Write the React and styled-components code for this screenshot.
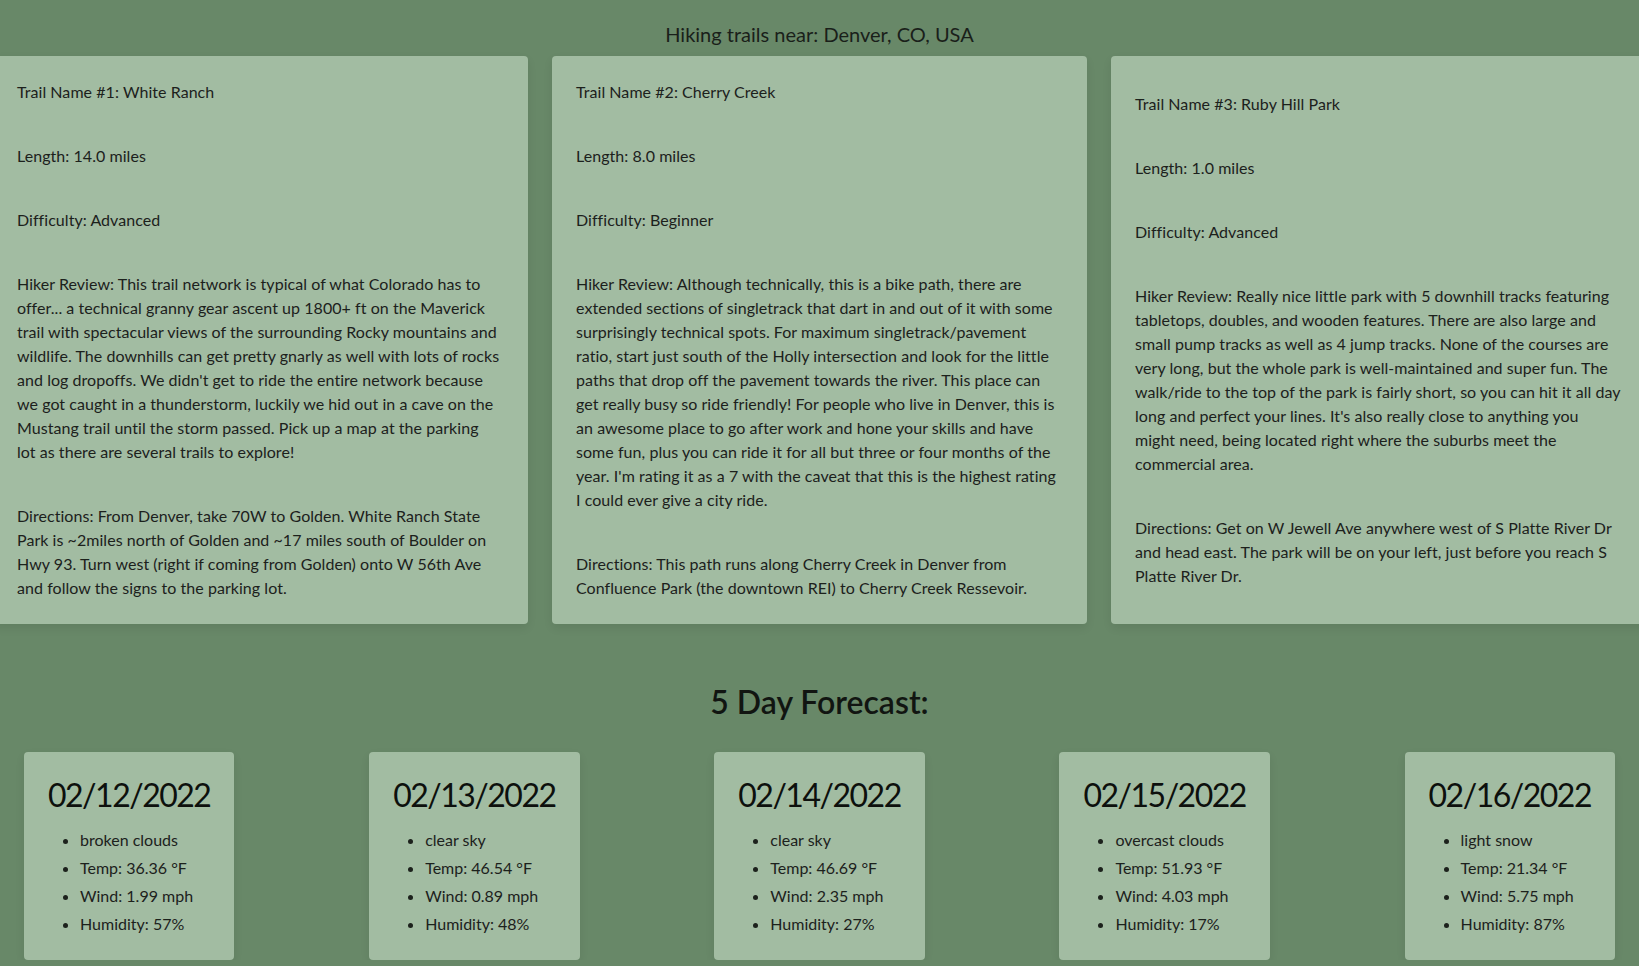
import React from "react";
import styled, { createGlobalStyle } from "styled-components";

const GlobalStyle = createGlobalStyle`
  html, body {
    margin: 0;
    padding: 0;
    background: #688868;
    overflow-x: hidden;
  }
  body {
    font-family: "Lato", "Liberation Sans", sans-serif;
    color: #1c211c;
    font-size: 16px;
    line-height: 1.5;
  }
`;

const Page = styled.main`
  display: flex;
  flex-direction: column;
  align-items: center;
  padding-top: 19px;
`;

const Title = styled.h1`
  margin: 0 0 7px;
  font-size: 20px;
  font-weight: 400;
  line-height: 30px;
  color: #1a1f1a;
  text-align: center;
`;

const TrailRow = styled.section`
  display: flex;
  justify-content: center;
  gap: 24px;
  width: 100%;
`;

const TrailCard = styled.article`
  flex: 0 0 535px;
  box-sizing: border-box;
  padding: 24px;
  background: #a2bca2;
  border-radius: 4px;
  box-shadow: 0 4px 10px rgba(0, 0, 0, 0.08);
  display: flex;
  flex-direction: column;
  justify-content: center;
  gap: 40px;
`;

const TrailText = styled.p`
  margin: 0;
  font-size: 16px;
  line-height: 24px;
  letter-spacing: 0.05px;
`;

const ForecastTitle = styled.h2`
  margin: 59px 0 31px;
  font-size: 32px;
  font-weight: 600;
  line-height: 38px;
  color: #111511;
`;

const ForecastRow = styled.section`
  display: flex;
  justify-content: space-between;
  align-items: flex-start;
  box-sizing: border-box;
  width: 100%;
  padding: 0 24px;
`;

const DayCard = styled.div`
  box-sizing: border-box;
  padding: 24px 24px 22px;
  background: #a2bca2;
  border-radius: 4px;
  box-shadow: 0 4px 10px rgba(0, 0, 0, 0.08);
`;

const DayDate = styled.h3`
  margin: 0;
  font-size: 32px;
  font-weight: 400;
  line-height: 38px;
  letter-spacing: -1.5px;
  color: #0d100d;
`;

const DayList = styled.ul`
  margin: 12px 0 0;
  padding-left: 32px;
`;

const DayItem = styled.li`
  font-size: 16px;
  line-height: 28px;
`;

const trails = [
  {
    n: 1,
    name: "White Ranch",
    length: "14.0",
    difficulty: "Advanced",
    review: [
      "This trail network is typical of what Colorado has to offer... a technical granny gear ascent up 1800+ ft on the Maverick trail with spectacular views of the surrounding Rocky mountains and wildlife. The downhills can get pretty gnarly as well with lots of rocks and log dropoffs. We didn't get to ride the entire network because we got caught in a thunderstorm, luckily we hid out in a cave on the Mustang trail until the storm passed. Pick up a map at the parking",
      "lot as there are several trails to explore!",
    ],
    directions:
      "From Denver, take 70W to Golden. White Ranch State Park is ~2miles north of Golden and ~17 miles south of Boulder on Hwy 93. Turn west (right if coming from Golden) onto W 56th Ave and follow the signs to the parking lot.",
  },
  {
    n: 2,
    name: "Cherry Creek",
    length: "8.0",
    difficulty: "Beginner",
    review: [
      "Although technically, this is a bike path, there are extended sections of singletrack that dart in and out of it with some surprisingly technical spots. For maximum singletrack/pavement ratio, start just south of the Holly intersection and look for the little paths that drop off the pavement towards the river. This place can get really busy so ride friendly! For people who live in Denver, this is an awesome place to go after work and hone your skills and have some fun, plus you can ride it for all but three or four months of the year. I'm rating it as a 7 with the caveat that this is the highest rating I could ever give a city ride.",
    ],
    directions:
      "This path runs along Cherry Creek in Denver from Confluence Park (the downtown REI) to Cherry Creek Ressevoir.",
  },
  {
    n: 3,
    name: "Ruby Hill Park",
    length: "1.0",
    difficulty: "Advanced",
    review: [
      "Really nice little park with 5 downhill tracks featuring tabletops, doubles, and wooden features. There are also large and small pump tracks as well as 4 jump tracks. None of the courses are very long, but the whole park is well-maintained and super fun. The walk/ride to the top of the park is fairly short, so you can hit it all day long and perfect your lines. It's also really close to anything you might need, being located right where the suburbs meet the commercial area.",
    ],
    directions:
      "Get on W Jewell Ave anywhere west of S Platte River Dr and head east. The park will be on your left, just before you reach S Platte River Dr.",
  },
];

const days = [
  { date: "02/12/2022", desc: "broken clouds", temp: "36.36", wind: "1.99", hum: "57" },
  { date: "02/13/2022", desc: "clear sky", temp: "46.54", wind: "0.89", hum: "48" },
  { date: "02/14/2022", desc: "clear sky", temp: "46.69", wind: "2.35", hum: "27" },
  { date: "02/15/2022", desc: "overcast clouds", temp: "51.93", wind: "4.03", hum: "17" },
  { date: "02/16/2022", desc: "light snow", temp: "21.34", wind: "5.75", hum: "87" },
];

export default function App() {
  return (
    <>
      <GlobalStyle />
      <Page>
        <Title>Hiking trails near: Denver, CO, USA</Title>
        <TrailRow>
          {trails.map((t) => (
            <TrailCard key={t.n}>
              <TrailText>Trail Name #{t.n}: {t.name}</TrailText>
              <TrailText>Length: {t.length} miles</TrailText>
              <TrailText>Difficulty: {t.difficulty}</TrailText>
              <TrailText>
                Hiker Review:{" "}
                {t.review.map((part, i) => (
                  <React.Fragment key={i}>
                    {i > 0 && <br />}
                    {part}
                  </React.Fragment>
                ))}
              </TrailText>
              <TrailText>Directions: {t.directions}</TrailText>
            </TrailCard>
          ))}
        </TrailRow>
        <ForecastTitle>5 Day Forecast:</ForecastTitle>
        <ForecastRow>
          {days.map((d) => (
            <DayCard key={d.date}>
              <DayDate>{d.date}</DayDate>
              <DayList>
                <DayItem>{d.desc}</DayItem>
                <DayItem>Temp: {d.temp} °F</DayItem>
                <DayItem>Wind: {d.wind} mph</DayItem>
                <DayItem>Humidity: {d.hum}%</DayItem>
              </DayList>
            </DayCard>
          ))}
        </ForecastRow>
      </Page>
    </>
  );
}
